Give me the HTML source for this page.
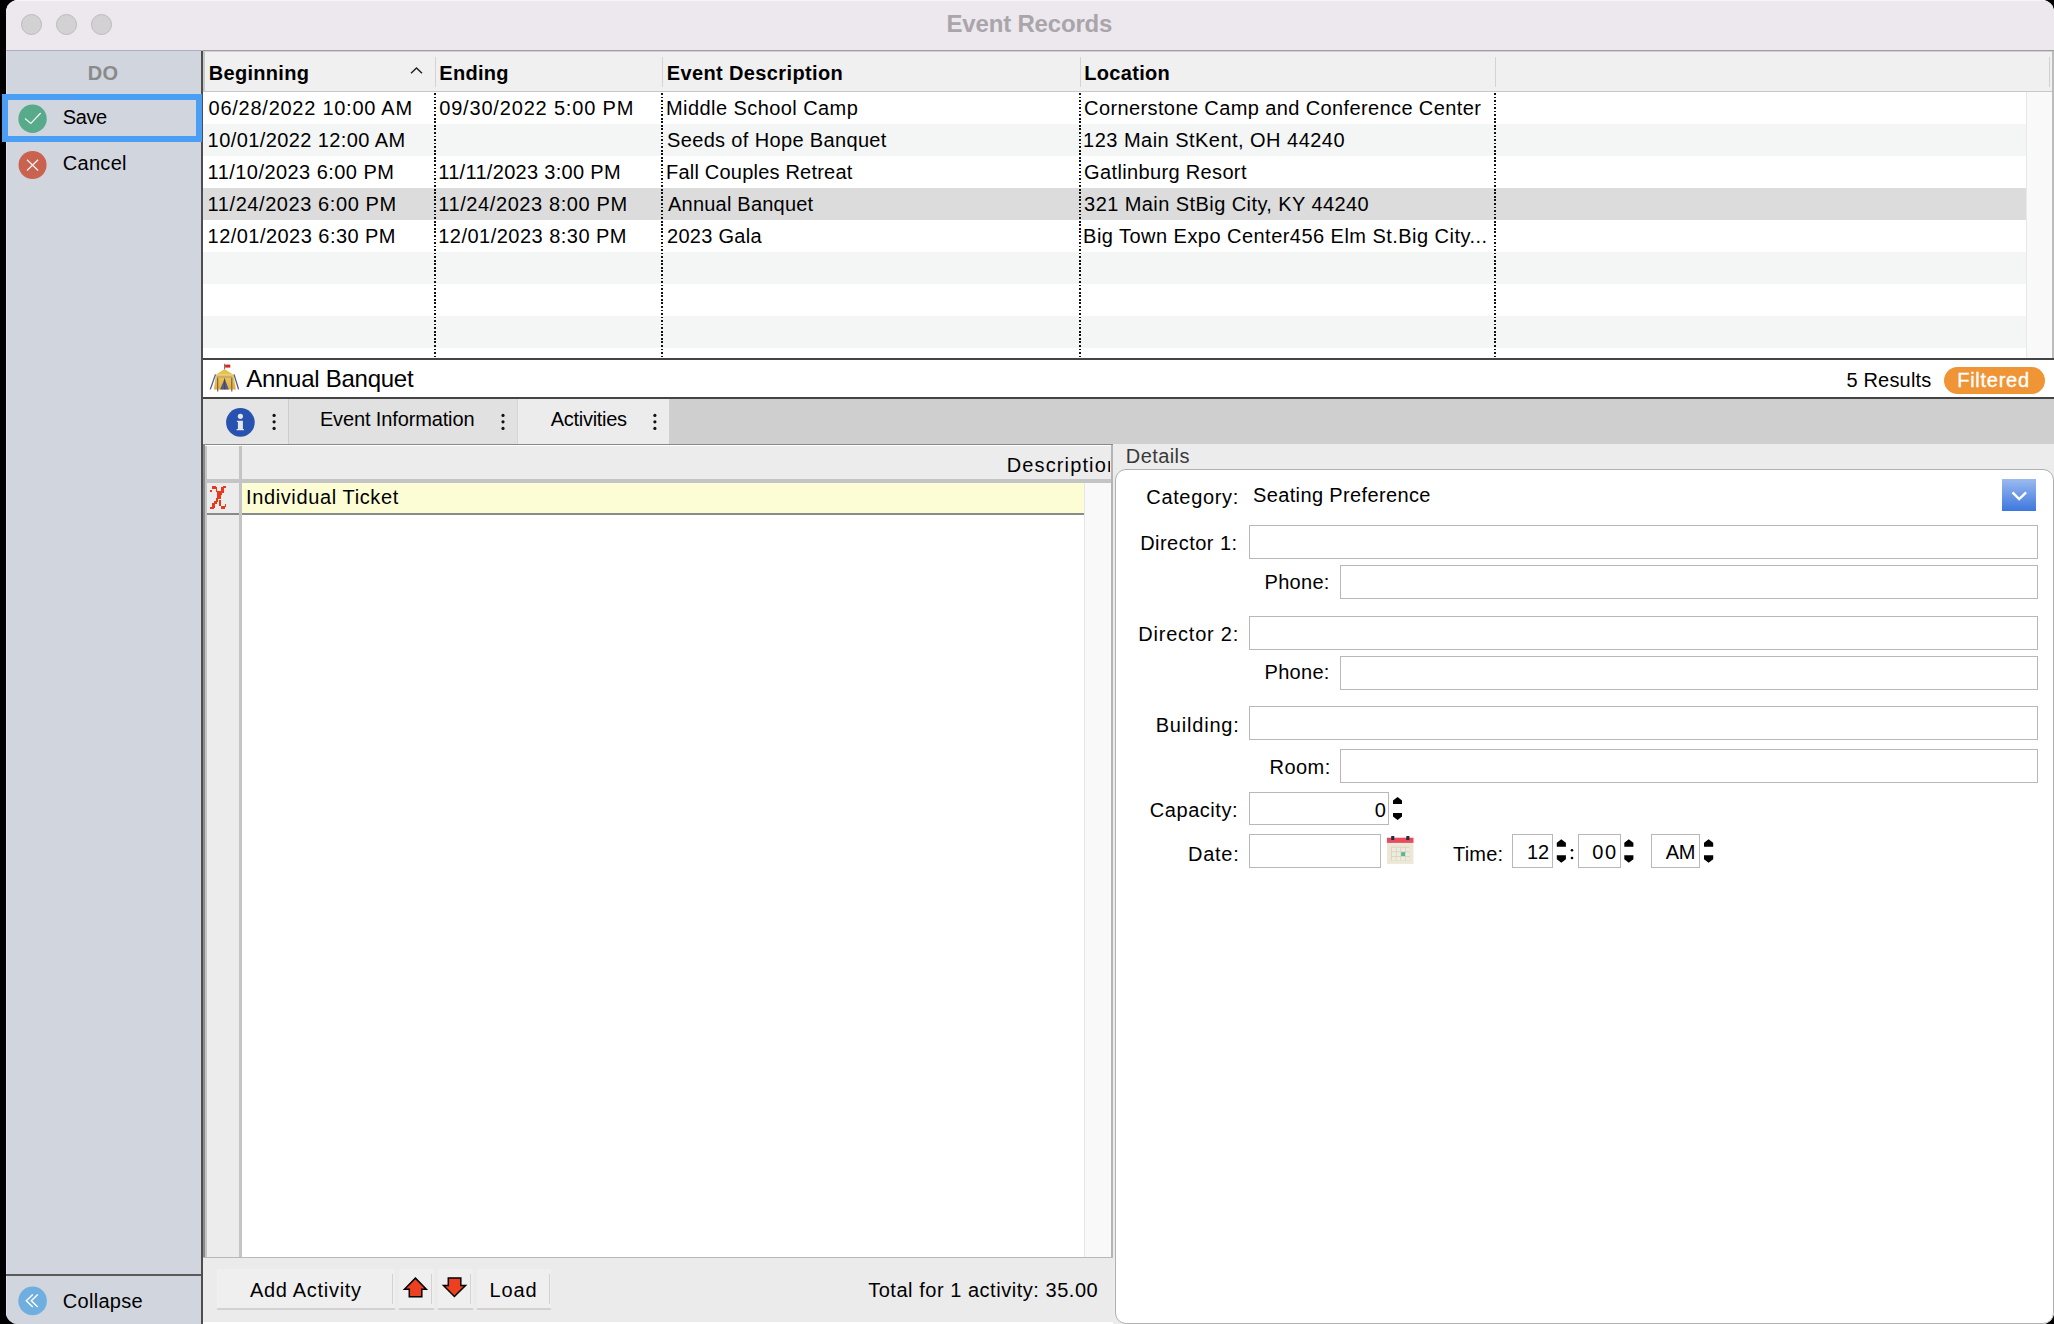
<!DOCTYPE html>
<html><head><meta charset="utf-8">
<style>
*{box-sizing:border-box}
html,body{margin:0;padding:0}
body{width:2054px;height:1324px;background:#000;overflow:hidden;position:relative;font-family:"Liberation Sans",sans-serif;font-size:20px;color:#000}
.a{position:absolute}
.t{position:absolute;white-space:nowrap;line-height:1}
svg{position:absolute;overflow:visible}
.inp{position:absolute;border:1px solid #b8b8b8;background:#fff}
.dot{position:absolute;width:2px;background:repeating-linear-gradient(#111 0 1.75px,transparent 1.75px 3.55px)}
.btn{position:absolute;top:1269px;height:41px;background:#efefef;border-bottom:2px solid #d2d2d2}
.sep{position:absolute;top:1274px;width:1px;height:30px;background:#d2d2d2}
#win{position:absolute;left:0;top:0;width:2054px;height:1324px;clip-path:inset(0 0 0 6px round 12px);background:#fff}
</style></head><body>
<div id="win">
  <!-- title bar -->
  <div class="a" style="left:0;top:0;width:2054px;height:50px;background:#ece8ee"></div>
  <div class="a" style="left:0;top:0;width:2054px;height:1px;background:#f6f4f7"></div>
  <div class="a" style="left:0;top:50px;width:203px;height:1px;background:#aab0ba"></div>
  <div class="a" style="left:203px;top:50px;width:1851px;height:1px;background:#9e9e9e"></div>
  <div class="a" style="left:20.5px;top:13.5px;width:21px;height:21px;border-radius:50%;background:#d4d1d5;border:1px solid #bdbabe"></div>
  <div class="a" style="left:55.5px;top:13.5px;width:21px;height:21px;border-radius:50%;background:#d4d1d5;border:1px solid #bdbabe"></div>
  <div class="a" style="left:90.5px;top:13.5px;width:21px;height:21px;border-radius:50%;background:#d4d1d5;border:1px solid #bdbabe"></div>

  <!-- sidebar -->
  <div class="a" style="left:0;top:51px;width:201px;height:1273px;background:#d0d5de"></div>
  <div class="a" style="left:6px;top:51px;width:1px;height:1273px;background:#dfe3ea"></div>
  <div class="a" style="left:201px;top:51px;width:2px;height:1273px;background:#4d4d4d"></div>
  <svg style="left:0;top:0" width="60" height="1324">
    <circle cx="32.55" cy="118.8" r="14.2" fill="#58ab8a"/>
    <polyline points="25,118.6 30.8,123.5 40.7,113" fill="none" stroke="#f4f4f4" stroke-width="1.25"/>
    <circle cx="32.55" cy="165" r="14" fill="#c9624f"/>
    <path d="M27 159.7 L38.1 170.5 M38.1 159.7 L27 170.5" stroke="#f4f4f4" stroke-width="1.25"/>
    <circle cx="32.6" cy="1300.9" r="14.3" fill="#6fafe0"/>
    <path d="M32.8 1294.4 L26.3 1300.7 L32.8 1307 M37.8 1294.4 L31.3 1300.7 L37.8 1307" fill="none" stroke="#fff" stroke-width="1.4"/>
  </svg>
  <div class="a" style="left:0;top:1274px;width:201px;height:2px;background:#5a5a5a"></div>

  <!-- main table -->
  <div class="a" style="left:203px;top:51px;width:1851px;height:40px;background:#f0f0f0"></div>
  <div class="a" style="left:203px;top:91px;width:1851px;height:1px;background:#c8c8c8"></div>
  <div class="a" style="left:203px;top:92px;width:1823px;height:266px;background:#fff"></div>
  <div class="a" style="left:203px;top:51px;width:1851px;height:1px;background:#d2d2d2"></div>
  <div class="a" style="left:203px;top:51px;width:2px;height:40px;background:#c8c8c8"></div>
  <div class="a" style="left:203px;top:124px;width:1823px;height:32px;background:#f4f5f5"></div>
  <div class="a" style="left:203px;top:188px;width:1823px;height:32px;background:#dcdcdc"></div>
  <div class="a" style="left:203px;top:252px;width:1823px;height:32px;background:#f4f5f5"></div>
  <div class="a" style="left:203px;top:316px;width:1823px;height:32px;background:#f4f5f5"></div>
  <div class="a" style="left:2026px;top:92px;width:26px;height:266px;background:#f9f9f9;border-left:1px solid #e8e8e8"></div>
  <div class="a" style="left:2052px;top:51px;width:2px;height:308px;background:#bcbcbc"></div>
  <div class="a" style="left:203px;top:358px;width:1851px;height:2px;background:#444"></div>
  <div class="dot" style="left:434px;top:92.5px;height:264px"></div>
  <div class="dot" style="left:661px;top:92.5px;height:264px"></div>
  <div class="dot" style="left:1079px;top:92.5px;height:264px"></div>
  <div class="dot" style="left:1494px;top:92.5px;height:264px"></div>
  <div class="a" style="left:435px;top:57px;width:1px;height:30px;background:#d4d4d4"></div>
  <div class="a" style="left:662px;top:57px;width:1px;height:30px;background:#d4d4d4"></div>
  <div class="a" style="left:1080px;top:57px;width:1px;height:30px;background:#d4d4d4"></div>
  <div class="a" style="left:1495px;top:57px;width:1px;height:30px;background:#d4d4d4"></div>
  <div class="a" style="left:2048.5px;top:57px;width:1.5px;height:30px;background:#d0d0d0"></div>
  <svg style="left:400px;top:60px" width="30" height="20">
    <polyline points="11,13.2 16.5,8 22,13.2" fill="none" stroke="#222" stroke-width="1.5"/>
  </svg>

  <!-- record title -->
  <svg style="left:206px;top:360px" width="40" height="36">
    <defs><linearGradient id="tg" x1="0" y1="0" x2="0" y2="1"><stop offset="0" stop-color="#ecc958"/><stop offset="1" stop-color="#e9ad38"/></linearGradient></defs>
    <line x1="18.6" y1="3.8" x2="18.6" y2="9.5" stroke="#6a6a6a" stroke-width="1"/>
    <rect x="19.1" y="4.6" width="5.2" height="3" fill="#d42a1e"/>
    <polygon points="18.6,9 9.8,14.7 27.5,14.7" fill="#e6c14f"/>
    <polygon points="9.8,14.7 27.5,14.7 29.9,29.6 7.9,29.6" fill="url(#tg)"/>
    <rect x="11.1" y="16.3" width="15" height="1.4" fill="#b9a27e"/>
    <rect x="11" y="17.7" width="1.3" height="13.8" fill="#707072"/>
    <rect x="25.1" y="17.7" width="1.3" height="13.8" fill="#707072"/>
    <polygon points="18.6,18.5 14.1,29.4 22.8,29.4" fill="#515b86"/>
    <line x1="18.6" y1="18.5" x2="18.6" y2="29.4" stroke="#3e4666" stroke-width="0.8"/>
    <line x1="9.5" y1="14.4" x2="4.3" y2="29.4" stroke="#4f5a85" stroke-width="1.3"/>
    <line x1="28" y1="14.4" x2="32.6" y2="29.4" stroke="#4f5a85" stroke-width="1.3"/>
  </svg>
  <div class="a" style="left:1944px;top:367px;width:101px;height:27px;border-radius:13.5px;background:#ef9535"></div>
  <div class="a" style="left:203px;top:397px;width:1851px;height:2px;background:#444"></div>

  <!-- tab bar -->
  <div class="a" style="left:203px;top:399px;width:1851px;height:45px;background:#cfcfcf"></div>
  <div class="a" style="left:203px;top:399px;width:85px;height:45px;background:#e5e5e5"></div>
  <div class="a" style="left:288px;top:399px;width:229px;height:45px;background:#e1e1e1;border-left:1px solid #cdcdcd"></div>
  <div class="a" style="left:517px;top:399px;width:152px;height:45px;background:#ececec;border-left:1px solid #d6d6d6"></div>
  <svg style="left:200px;top:400px" width="480" height="44">
    <circle cx="40.4" cy="22.4" r="14.3" fill="#2852b0"/>
    <circle cx="40.4" cy="16.3" r="2.6" fill="#e6e6e6"/>
    <path d="M37.9 20.7 H42.9 V29.1 H43.9 V30.3 H36.6 V29.1 H37.9 V22 H36.9 V20.7 Z" fill="#e6e6e6"/>
    <circle cx="74.1" cy="15.4" r="1.6" fill="#111"/>
    <circle cx="74.1" cy="21.8" r="1.6" fill="#111"/>
    <circle cx="74.1" cy="28.4" r="1.6" fill="#111"/>
    <circle cx="303" cy="15.4" r="1.6" fill="#111"/>
    <circle cx="303" cy="21.8" r="1.6" fill="#111"/>
    <circle cx="303" cy="28.4" r="1.6" fill="#111"/>
    <circle cx="454.9" cy="15.4" r="1.6" fill="#111"/>
    <circle cx="454.9" cy="21.8" r="1.6" fill="#111"/>
    <circle cx="454.9" cy="28.4" r="1.6" fill="#111"/>
  </svg>
  <div class="a" style="left:203px;top:444px;width:910px;height:2px;background:#8a8a8a"></div>

  <!-- activities -->
  <div class="a" style="left:203px;top:445px;width:2px;height:813px;background:#8a8a8a"></div>
  <div class="a" style="left:205px;top:445px;width:907px;height:812px;background:#fff"></div>
  <div class="a" style="left:205px;top:446px;width:907px;height:33px;background:#ececec"></div>
  <div class="a" style="left:205px;top:446px;width:34px;height:811px;background:#ececec;border-left:2px solid #c4c4c4"></div>
  <div class="a" style="left:239px;top:446px;width:3px;height:811px;background:#c4c4c4"></div>
  <div class="a" style="left:205px;top:479px;width:907px;height:4px;background:#c4c4c4"></div>
  <div class="a" style="left:242px;top:483px;width:842px;height:30px;background:#fdfdd5"></div>
  <div class="a" style="left:242px;top:513px;width:842px;height:2px;background:#8a8a8a"></div>
  <div class="a" style="left:207px;top:513px;width:32px;height:2px;background:#8a8a8a"></div>
  <div class="a" style="left:1084px;top:483px;width:27px;height:774px;background:#f9f9f9;border-left:1px solid #e6e6e6"></div>
  <div class="a" style="left:1111px;top:445px;width:2px;height:813px;background:#b4b4b4"></div>
  <div class="a" style="left:203px;top:1257px;width:910px;height:1px;background:#b8b8b8"></div>
  <svg style="left:208px;top:484px" width="22" height="28" shape-rendering="crispEdges">
    <g fill="#e8391c">
      <rect x="4" y="2" width="4" height="3"/><rect x="8" y="3" width="1" height="5"/>
      <rect x="2" y="6" width="2" height="2"/>
      <rect x="15" y="2" width="3" height="2"/><rect x="13" y="3" width="3" height="6"/>
      <rect x="9" y="7" width="5" height="4"/><rect x="9" y="10" width="4" height="5"/>
      <rect x="8" y="14" width="2" height="4"/>
      <rect x="6" y="17" width="3" height="3"/>
      <rect x="4" y="19" width="3" height="5"/>
      <rect x="2" y="23" width="4" height="2"/>
      <rect x="11" y="16" width="2" height="6"/>
      <rect x="13" y="22" width="4" height="3"/>
      <rect x="17" y="20" width="1" height="3"/>
    </g>
  </svg>

  <!-- footer -->
  <div class="a" style="left:203px;top:1258px;width:910px;height:64px;background:#ebebeb"></div>
  <div class="btn" style="left:217px;width:178px"></div>
  <div class="btn" style="left:398.8px;width:35px"></div>
  <div class="btn" style="left:437.8px;width:35px"></div>
  <div class="btn" style="left:476.8px;width:74.5px"></div>
  <div class="sep" style="left:392px"></div>
  <div class="sep" style="left:431px"></div>
  <div class="sep" style="left:470px"></div>
  <div class="sep" style="left:549px"></div>
  <svg style="left:390px;top:1265px" width="90" height="40">
    <polygon points="25.4,13.1 36.3,24.2 31.8,24.2 31.8,31.8 19.3,31.8 19.3,24.2 14.5,24.2" fill="#ec4020" stroke="#000" stroke-width="1.5" stroke-linejoin="miter"/>
    <polygon points="58.3,12.9 70.8,12.9 70.8,20.6 75.5,20.6 64.4,31.5 53.5,20.6 58.3,20.6" fill="#ec4020" stroke="#000" stroke-width="1.5" stroke-linejoin="miter"/>
  </svg>

  <!-- details -->
  <div class="a" style="left:1113px;top:444px;width:941px;height:880px;background:#ececec"></div>
  <div class="a" style="left:1115px;top:469px;width:939px;height:855px;background:#fff;border:1px solid #b0b0b0;border-radius:11px"></div>
  <div class="a" style="left:2002px;top:479px;width:34px;height:32px;background:linear-gradient(#9bbaef,#3d77de)"></div>
  <svg style="left:2000px;top:478px" width="40" height="36">
    <polyline points="12.5,14.3 19.2,21 26.1,14.3" fill="none" stroke="#fff" stroke-width="2.4"/>
  </svg>

  <div class="inp" style="left:1249px;top:525px;width:789px;height:34px"></div>
  <div class="inp" style="left:1340px;top:565px;width:698px;height:34px"></div>
  <div class="inp" style="left:1249px;top:616px;width:789px;height:34px"></div>
  <div class="inp" style="left:1340px;top:656px;width:698px;height:34px"></div>
  <div class="inp" style="left:1249px;top:706px;width:789px;height:34px"></div>
  <div class="inp" style="left:1340px;top:749px;width:698px;height:34px"></div>
  <div class="inp" style="left:1249px;top:792px;width:140px;height:33px"></div>
  <div class="inp" style="left:1249px;top:834px;width:132px;height:34px"></div>
  <div class="inp" style="left:1512px;top:834px;width:41px;height:34px"></div>
  <div class="inp" style="left:1578px;top:834px;width:43px;height:34px"></div>
  <div class="inp" style="left:1651px;top:834px;width:49px;height:34px"></div>
  <svg style="left:1380px;top:790px" width="340" height="80">
    <g fill="#000">
      <path d="M17.6 7 L22 10.5 V13.9 H13 V10.5 Z"/>
      <path d="M13 23 H22 V26.5 L17.6 30 L13 26.5 Z"/>
      <path d="M181.3 49.2 L185.9 52.7 V56.7 H176.8 V52.7 Z"/>
      <path d="M176.8 65.3 H185.9 V69.3 L181.3 72.8 L176.8 69.3 Z"/>
      <path d="M248.8 49.2 L253.4 52.7 V56.7 H244.3 V52.7 Z"/>
      <path d="M244.3 65.3 H253.4 V69.3 L248.8 72.8 L244.3 69.3 Z"/>
      <path d="M328.6 49.2 L333.2 52.7 V56.7 H324 V52.7 Z"/>
      <path d="M324 65.3 H333.2 V69.3 L328.6 72.8 L324 69.3 Z"/>
      <circle cx="192" cy="60.3" r="1.3"/>
      <circle cx="192" cy="68" r="1.3"/>
    </g>
    <!-- calendar -->
    <rect x="7" y="52.9" width="26.5" height="21" fill="#ebe8d8"/>
    <rect x="7" y="47.7" width="26.5" height="5.2" fill="#e84b5a"/>
    <rect x="11.2" y="46" width="3.1" height="4" fill="#1e2e48"/>
    <rect x="26.3" y="46" width="3.1" height="4" fill="#1e2e48"/>
    <rect x="11.2" y="56.8" width="18.4" height="13.9" fill="#d6d2bb"/>
    <g fill="#efecdf">
      <rect x="12" y="57.6" width="3.8" height="3.8"/><rect x="16.6" y="57.6" width="3.8" height="3.8"/><rect x="21.2" y="57.6" width="3.8" height="3.8"/><rect x="25.8" y="57.6" width="3.8" height="3.8"/>
      <rect x="12" y="62.2" width="3.8" height="3.8"/><rect x="16.6" y="62.2" width="3.8" height="3.8"/><rect x="25.8" y="62.2" width="3.8" height="3.8"/>
      <rect x="12" y="66.8" width="3.8" height="3.8"/><rect x="16.6" y="66.8" width="3.8" height="3.8"/><rect x="21.2" y="66.8" width="3.8" height="3.8"/><rect x="25.8" y="66.8" width="3.8" height="3.8"/>
    </g>
    <rect x="21.2" y="62.2" width="3.8" height="3.8" fill="#4fba98"/>
  </svg>

  <div class="t" style="left:946.5px;top:11.8px;font-size:24px;font-weight:700;color:#a9a5aa;letter-spacing:-0.183px">Event Records</div>
  <div class="t" style="left:87.8px;top:63.0px;font-weight:700;color:#8a8a8a;letter-spacing:0.2px">DO</div>
  <div class="t" style="left:62.7px;top:107.2px;letter-spacing:-0.367px">Save</div>
  <div class="t" style="left:62.7px;top:153.3px;letter-spacing:0.32px">Cancel</div>
  <div class="t" style="left:62.7px;top:1290.9px;letter-spacing:0.314px">Collapse</div>
  <div class="t" style="left:208.8px;top:62.9px;font-weight:700;letter-spacing:0.3px">Beginning</div>
  <div class="t" style="left:439.3px;top:62.9px;font-weight:700;letter-spacing:0.28px">Ending</div>
  <div class="t" style="left:666.8px;top:62.9px;font-weight:700;letter-spacing:0.369px">Event Description</div>
  <div class="t" style="left:1084.3px;top:62.9px;font-weight:700;letter-spacing:0.314px">Location</div>
  <div class="t" style="left:208.6px;top:98.2px;letter-spacing:0.739px">06/28/2022 10:00 AM</div>
  <div class="t" style="left:439.2px;top:98.2px;letter-spacing:0.824px">09/30/2022 5:00 PM</div>
  <div class="t" style="left:666.0px;top:98.2px;letter-spacing:0.429px">Middle School Camp</div>
  <div class="t" style="left:1084.1px;top:98.2px;letter-spacing:0.386px">Cornerstone Camp and Conference Center</div>
  <div class="t" style="left:207.6px;top:130.2px;letter-spacing:0.411px">10/01/2022 12:00 AM</div>
  <div class="t" style="left:667.0px;top:130.2px;letter-spacing:0.35px">Seeds of Hope Banquet</div>
  <div class="t" style="left:1083.1px;top:130.2px;letter-spacing:0.471px">123 Main StKent, OH 44240</div>
  <div class="t" style="left:207.6px;top:162.2px;letter-spacing:0.447px">11/10/2023 6:00 PM</div>
  <div class="t" style="left:438.2px;top:162.2px;letter-spacing:0.312px">11/11/2023 3:00 PM</div>
  <div class="t" style="left:666.0px;top:162.2px;letter-spacing:0.211px">Fall Couples Retreat</div>
  <div class="t" style="left:1084.1px;top:162.2px;letter-spacing:0.35px">Gatlinburg Resort</div>
  <div class="t" style="left:207.6px;top:194.2px;letter-spacing:0.576px">11/24/2023 6:00 PM</div>
  <div class="t" style="left:438.2px;top:194.2px;letter-spacing:0.6px">11/24/2023 8:00 PM</div>
  <div class="t" style="left:668.0px;top:194.2px;letter-spacing:0.215px">Annual Banquet</div>
  <div class="t" style="left:1084.1px;top:194.2px;letter-spacing:0.425px">321 Main StBig City, KY 44240</div>
  <div class="t" style="left:207.6px;top:226.2px;letter-spacing:0.459px">12/01/2023 6:30 PM</div>
  <div class="t" style="left:438.2px;top:226.2px;letter-spacing:0.482px">12/01/2023 8:30 PM</div>
  <div class="t" style="left:667.0px;top:226.2px;letter-spacing:0.287px">2023 Gala</div>
  <div class="t" style="left:1083.1px;top:226.2px;letter-spacing:0.461px">Big Town Expo Center456 Elm St.Big City...</div>
  <div class="t" style="left:246.2px;top:367.1px;font-size:24px;letter-spacing:-0.262px">Annual Banquet</div>
  <div class="t" style="left:1846.4px;top:369.7px;letter-spacing:0.188px">5 Results</div>
  <div class="t" style="left:1957.2px;top:369.7px;color:#fff;letter-spacing:0.743px;-webkit-text-stroke:0.35px #fff">Filtered</div>
  <div class="t" style="left:319.9px;top:408.7px;letter-spacing:-0.131px">Event Information</div>
  <div class="t" style="left:550.7px;top:408.7px;letter-spacing:-0.278px">Activities</div>
  <div class="t" style="left:1006.7px;top:455.0px;letter-spacing:1.13px;width:103px;height:24px;overflow:hidden">Description</div>
  <div class="t" style="left:246.0px;top:487.4px;letter-spacing:0.625px">Individual Ticket</div>
  <div class="t" style="left:249.9px;top:1280.2px;letter-spacing:0.709px">Add Activity</div>
  <div class="t" style="left:489.6px;top:1280.2px;letter-spacing:0.867px">Load</div>
  <div class="t" style="left:868.2px;top:1280.4px;letter-spacing:0.531px">Total for 1 activity: 35.00</div>
  <div class="t" style="left:1125.8px;top:446.4px;color:#3a3a3a;letter-spacing:0.417px">Details</div>
  <div class="t" style="left:1146.3px;top:486.9px;letter-spacing:0.65px">Category:</div>
  <div class="t" style="left:1253.0px;top:485.3px;letter-spacing:0.365px">Seating Preference</div>
  <div class="t" style="left:1140.2px;top:533.3px;letter-spacing:0.46px">Director 1:</div>
  <div class="t" style="left:1264.6px;top:572.0px;letter-spacing:0.28px">Phone:</div>
  <div class="t" style="left:1138.3px;top:624.0px;letter-spacing:0.77px">Director 2:</div>
  <div class="t" style="left:1264.6px;top:662.4px;letter-spacing:0.28px">Phone:</div>
  <div class="t" style="left:1155.7px;top:714.7px;letter-spacing:0.8px">Building:</div>
  <div class="t" style="left:1269.5px;top:757.0px;letter-spacing:0.45px">Room:</div>
  <div class="t" style="left:1149.8px;top:799.8px;letter-spacing:0.55px">Capacity:</div>
  <div class="t" style="left:1374.7px;top:799.8px">0</div>
  <div class="t" style="left:1188.0px;top:844.4px;letter-spacing:0.75px">Date:</div>
  <div class="t" style="left:1453.0px;top:844.4px;letter-spacing:0.2px">Time:</div>
  <div class="t" style="left:1527.0px;top:842.0px">12</div>
  <div class="t" style="left:1592.3px;top:842.0px;letter-spacing:1.7px">00</div>
  <div class="t" style="left:1665.7px;top:842.0px;letter-spacing:-0.2px">AM</div>
</div>
<!-- save focus ring (extends outside window) -->
<div class="a" style="left:2px;top:94px;width:200px;height:48px;border:6px solid #4a9ff5"></div>
</body></html>
